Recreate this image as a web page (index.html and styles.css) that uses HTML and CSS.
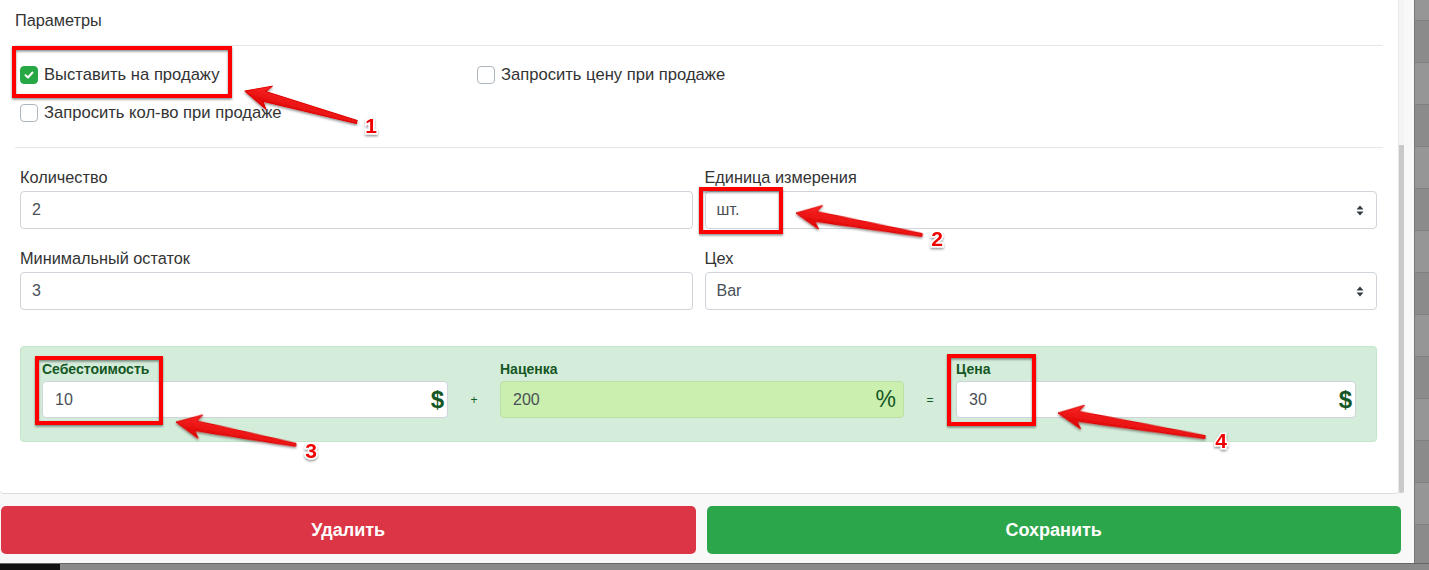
FILE: index.html
```html
<!DOCTYPE html>
<html lang="ru">
<head>
  <meta charset="UTF-8">
  <meta name="viewport" content="width=device-width, initial-scale=1.0">
  <title>Параметры товара</title>
  <link rel="stylesheet" href="styles.css">
</head>
<body>
  <div class="modal">
    <div class="modal-body">
      <div class="content">
        <div class="section-title">Параметры</div>

        <div class="checks">
          <label class="check">
            <span class="box checked">
              <svg width="10" height="8" viewBox="0 0 10 8"><path d="M1.5 4.2 L4 6.5 L8.5 1.5" fill="none" stroke="#fff" stroke-width="2" stroke-linecap="round" stroke-linejoin="round"/></svg>
            </span>
            Выставить на продажу
          </label>
          <label class="check"><span class="box"></span>Запросить цену при продаже</label>
          <label class="check"><span class="box"></span>Запросить кол-во при продаже</label>
        </div>

        <div class="fields">
          <div class="field">
            <label>Количество</label>
            <div class="input">2</div>
          </div>
          <div class="field">
            <label>Единица измерения</label>
            <div class="input select">шт.
              <svg width="8" height="11" viewBox="0 0 8 11"><path d="M4 0.5 L7.5 4.5 H0.5Z M4 10.5 L7.5 6.5 H0.5Z" fill="#343a40"/></svg>
            </div>
          </div>
          <div class="field">
            <label>Минимальный остаток</label>
            <div class="input">3</div>
          </div>
          <div class="field">
            <label>Цех</label>
            <div class="input select">Bar
              <svg width="8" height="11" viewBox="0 0 8 11"><path d="M4 0.5 L7.5 4.5 H0.5Z M4 10.5 L7.5 6.5 H0.5Z" fill="#343a40"/></svg>
            </div>
          </div>
        </div>

        <div class="price-box">
          <div class="price-field">
            <label>Себестоимость</label>
            <div class="input">10<span class="unit">$</span></div>
          </div>
          <div class="op">+</div>
          <div class="price-field markup">
            <label>Наценка</label>
            <div class="input">200<span class="unit">%</span></div>
          </div>
          <div class="op">=</div>
          <div class="price-field">
            <label>Цена</label>
            <div class="input">30<span class="unit">$</span></div>
          </div>
        </div>
      </div>
      <div class="scrollbar"><div class="thumb"></div></div>
    </div>

    <div class="modal-footer">
      <button class="btn btn-danger">Удалить</button>
      <button class="btn btn-success">Сохранить</button>
    </div>
  </div>
  <div class="dock"><div class="dock-left"></div></div>

  <!-- пометки поверх скриншота -->
  <svg class="marks" width="1429" height="570" viewBox="0 0 1429 570">
    <defs>
      <filter id="shadow" x="-20%" y="-20%" width="140%" height="140%">
        <feDropShadow dx="0" dy="1.5" stdDeviation="1.2" flood-color="#000" flood-opacity="0.45"/>
      </filter>
      <linearGradient id="arrowFill" x1="0" y1="0" x2="0" y2="1">
        <stop offset="0" stop-color="#ff2a2a"/>
        <stop offset="1" stop-color="#d80000"/>
      </linearGradient>
    </defs>

    <g class="frames" filter="url(#shadow)">
      <rect x="14" y="48" width="216" height="48"/>
      <rect x="701" y="189" width="80" height="43"/>
      <rect x="37" y="358" width="124" height="65"/>
      <rect x="949" y="356" width="85" height="68"/>
    </g>

    <g class="arrows" filter="url(#shadow)">
      <polygon transform="translate(245,91) rotate(15.5)" points="0,0 25,-12 20,-5 116,-1.5 116,1.5 20,5 25,12"/>
      <polygon transform="translate(796,213) rotate(9.9)" points="0,0 25,-12 20,-5 128,-1.5 128,1.5 20,5 25,12"/>
      <polygon transform="translate(176,422) rotate(10.8)" points="0,0 25,-12 20,-5 122,-1.5 122,1.5 20,5 25,12"/>
      <polygon transform="translate(1058,413) rotate(9.3)" points="0,0 25,-12 20,-5 149,-1.5 149,1.5 20,5 25,12"/>
    </g>

    <g class="nums" filter="url(#shadow)">
      <text x="371" y="133">1</text>
      <text x="937" y="246">2</text>
      <text x="311" y="458">3</text>
      <text x="1221" y="448">4</text>
    </g>
  </svg>
</body>
</html>
```

FILE: styles.css
```css
body {
  margin: 0;
  height: 570px;
  overflow: hidden;
  position: relative;
  font-family: "Liberation Sans", Arial, sans-serif;
  color: #333;
  background-color: #8d8d8d;
  background-image: linear-gradient(#808080 0 1px, #8b8b8b 1px 42px, #808080 42px 43px, #969696 43px 84px);
  background-size: 100% 84px;
  background-position: 0 20px;
}

.modal {
  width: 1414px;
  height: 563px;
  background: #f8f8f8;
  display: flex;
  flex-direction: column;
  box-shadow: 1px 0 0 #777;
}

.modal-body {
  width: 1404px;
  height: 494px;
  display: flex;
}
.content {
  flex: 1;
  background: #fff;
  border-bottom: 1px solid #dcdcdc;
  border-radius: 0 0 4px 4px;
}
.scrollbar {
  width: 6px;
  display: flex;
  flex-direction: column;
  background: #f4f4f4;
  border-left: 1px solid #e8e8e8;
  box-sizing: border-box;
}
.thumb {
  margin-top: 145px;
  margin-bottom: 1px;
  flex: 1;
  background: #c9c9c9;
  border-radius: 0 0 3px 3px;
}

.section-title {
  margin: 0 15px;
  padding: 10px 0 15px;
  line-height: 20px;
  font-size: 16.3px;
  border-bottom: 1px solid #e6e6e6;
}

.checks {
  margin: 0 15px;
  padding: 10px 0 15px;
  display: flex;
  flex-wrap: wrap;
  border-bottom: 1px solid #e6e6e6;
}
.check {
  width: 457px;
  height: 38px;
  box-sizing: border-box;
  padding-left: 5px;
  display: flex;
  align-items: center;
  gap: 6px;
  font-size: 16.6px;
}
.box {
  width: 18px;
  height: 18px;
  box-sizing: border-box;
  border: 1px solid #adb5bd;
  border-radius: 4px;
  background: #fff;
  display: flex;
  align-items: center;
  justify-content: center;
}
.box.checked {
  background: #28a745;
  border-color: #28a745;
}

.fields {
  padding: 19px 21px 0 20px;
  display: grid;
  grid-template-columns: 1fr 1fr;
  column-gap: 12px;
  row-gap: 19px;
}
.field label {
  display: block;
  font-size: 16.3px;
  line-height: 20px;
  margin-bottom: 4px;
}
.input {
  height: 38px;
  box-sizing: border-box;
  border: 1px solid #ced4da;
  border-radius: 4px;
  padding: 0 11px;
  display: flex;
  align-items: center;
  font-size: 16px;
  color: #495057;
  background: #fff;
}
.select {
  justify-content: space-between;
  padding-right: 12px;
}

.price-box {
  margin: 36px 21px 0 20px;
  height: 96px;
  box-sizing: border-box;
  padding: 14px 20px 23px 21px;
  background: #d4edda;
  border: 1px solid #c3e6cb;
  border-radius: 4px;
  display: grid;
  grid-template-columns: 406px 52px 404px 52px 1fr;
  align-items: end;
}
.price-field label {
  display: block;
  font-size: 14px;
  font-weight: bold;
  line-height: 16px;
  margin-bottom: 4px;
  color: #155724;
}
.price-field .input {
  height: 37px;
  padding: 0 3px 0 12px;
  justify-content: space-between;
}
.markup .input {
  background: #cbefae;
  border-color: #bcdfa6;
  padding-right: 7px;
}
.unit {
  font-size: 24px;
  font-weight: bold;
  color: #155724;
}
.markup .unit {
  font-weight: normal;
  font-size: 23px;
}
.op {
  height: 37px;
  display: flex;
  align-items: center;
  justify-content: center;
  font-size: 12px;
  color: #155724;
}

.modal-footer {
  display: flex;
  gap: 11px;
  padding: 12px 13px 0 1px;
}
.btn {
  flex: 1;
  height: 48px;
  border: none;
  border-radius: 5px;
  color: #fff;
  font-family: "Liberation Sans", Arial, sans-serif;
  font-size: 18px;
  font-weight: bold;
}
.btn-danger { background: #dc3545; }
.btn-success { background: #2ca64a; }

.dock {
  height: 7px;
  background: #8a8a8a;
  border-top: 1px solid #666;
  box-sizing: border-box;
}
.dock-left {
  width: 60px;
  height: 100%;
  background: #111;
}

.marks {
  position: absolute;
  left: 0;
  top: 0;
  pointer-events: none;
}
.frames rect {
  fill: none;
  stroke: #ff0000;
  stroke-width: 4;
}
.arrows polygon {
  fill: url(#arrowFill);
  stroke: #e00000;
  stroke-width: 1;
  stroke-linejoin: round;
}
.nums text {
  font-family: "Liberation Sans", Arial, sans-serif;
  font-size: 21px;
  font-weight: bold;
  fill: #f00000;
  stroke: #fff;
  stroke-width: 3px;
  paint-order: stroke;
  text-anchor: middle;
}
```
